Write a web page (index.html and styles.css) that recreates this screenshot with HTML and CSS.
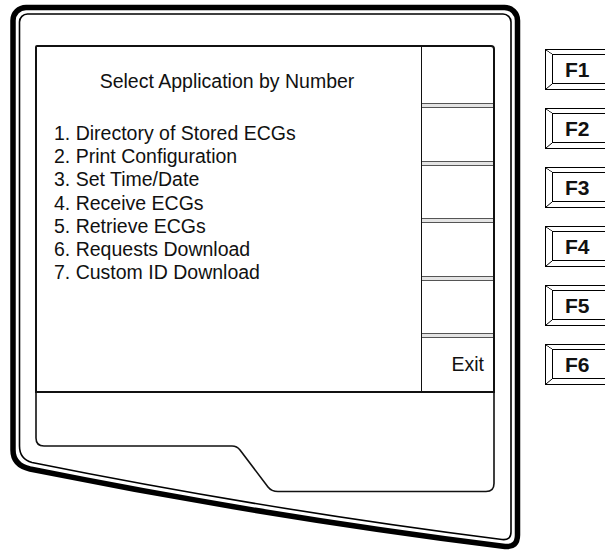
FILE: index.html
```html
<!DOCTYPE html>
<html lang="en">
<head>
  <meta charset="UTF-8" />
  <meta name="viewport" content="width=device-width, initial-scale=1.0"/>
  <title>Select Application</title>
  <link rel="stylesheet" href="styles.css">
</head>
<body>

  <div class="panel">
    <!-- bezel and lower screen outline, drawn on the panel canvas -->
    <svg class="bezel" width="605" height="552" viewBox="0 0 605 552">
      <path class="outer" d="M 13 20.5 A 13 13 0 0 1 26 7.5 L 504.5 7.5 A 13 13 0 0 1 517.5 20.5 L 517.5 535 Q 517.5 547.5 505 546.5 Q 268 517 30 469 Q 13 465 13 450 Z"/>
      <path class="inner" d="M 19.5 22 A 8 8 0 0 1 27.5 14 L 503 14 A 8 8 0 0 1 511 22 L 511 532 Q 511 540.5 502 539.5 Q 268 510 32 462.5 Q 19.5 459 19.5 446 Z"/>
      <path class="lower" d="M 36 392 L 36 438 Q 36 446 44 446 L 232 446 Q 237 446 240 450 L 268 487 Q 271.5 491.5 278 491.5 L 486 491.5 Q 494 491.5 494 483.5 L 494 392"/>
    </svg>

    <div class="screen">
      <div class="menu">
        <div class="menu-title">Select Application by Number</div>
        <ol class="menu-list">
          <li>1. Directory of Stored ECGs</li>
          <li>2. Print Configuration</li>
          <li>3. Set Time/Date</li>
          <li>4. Receive ECGs</li>
          <li>5. Retrieve ECGs</li>
          <li>6. Requests Download</li>
          <li>7. Custom ID Download</li>
        </ol>
      </div>
      <div class="softkeys">
        <div class="softkey first"></div>
        <div class="sep"></div>
        <div class="softkey"></div>
        <div class="sep"></div>
        <div class="softkey"></div>
        <div class="sep"></div>
        <div class="softkey"></div>
        <div class="sep"></div>
        <div class="softkey"></div>
        <div class="sep"></div>
        <div class="softkey last">Exit</div>
      </div>
    </div>

    <div class="keys">
      <div class="key"><div class="key-face">F1</div></div>
      <div class="key"><div class="key-face">F2</div></div>
      <div class="key"><div class="key-face">F3</div></div>
      <div class="key"><div class="key-face">F4</div></div>
      <div class="key"><div class="key-face">F5</div></div>
      <div class="key"><div class="key-face">F6</div></div>
    </div>
  </div>

</body>
</html>
```

FILE: styles.css
```css
body {
  margin: 0;
  background: #fff;
  color: #111;
  font-family: "Liberation Sans", Arial, sans-serif;
  overflow: hidden;
}
.panel {
  position: relative;
  display: flex;
  align-items: flex-start;
  width: 605px;
  height: 552px;
  overflow: hidden;
}
.bezel {
  position: absolute;
  left: 0;
  top: 0;
  pointer-events: none;
}
.bezel path {
  fill: none;
  stroke: #000;
}
.bezel .outer {
  stroke-width: 5.5;
}
.bezel .inner {
  stroke-width: 1.6;
}
.bezel .lower {
  stroke-width: 1.6;
  stroke: #111;
}

/* upper part of the display: menu + soft key column */
.screen {
  position: relative;
  flex-shrink: 0;
  display: grid;
  grid-template-columns: 384px 1fr;
  box-sizing: border-box;
  width: 460px;
  height: 348px;
  margin: 45px 0 0 35px;
  border: 2px solid #111;
  border-radius: 2px 4px 0 0;
}
.menu {
  padding-top: 23px;
  font-size: 19.5px;
}
.menu-title {
  text-align: center;
  line-height: 23px;
  padding-right: 4px;
}
.menu-list {
  list-style: none;
  margin: 29px 0 0;
  padding: 0 0 0 17px;
  line-height: 23.2px;
}
.softkeys {
  display: flex;
  flex-direction: column;
  border-left: 1px solid #111;
}
.softkey {
  height: 52.5px;
}
.softkey.first {
  height: 56px;
}
.softkey.last {
  flex: 1;
  display: flex;
  align-items: center;
  justify-content: flex-end;
  padding-right: 9px;
  font-size: 19.5px;
}
.sep {
  box-sizing: border-box;
  height: 5px;
  border-top: 1px solid #555;
  border-bottom: 1px solid #555;
  background: #e4e4e4;
}

/* hard function keys on the right */
.keys {
  flex-shrink: 0;
  display: flex;
  flex-direction: column;
  gap: 18px;
  margin: 49px 0 0 50px;
}
.key {
  position: relative;
  box-sizing: border-box;
  width: 80px;
  height: 41px;
  padding: 4px 0 5px 6px;
  border: 1px solid #000;
  border-right: 0;
}
.key::before,
.key::after {
  content: "";
  position: absolute;
  left: 0;
  width: 6px;
}
.key::before {
  top: 0;
  height: 4px;
  background: linear-gradient(to top right, transparent 40%, #000 50%, transparent 60%);
}
.key::after {
  bottom: 0;
  height: 5px;
  background: linear-gradient(to bottom right, transparent 40%, #000 50%, transparent 60%);
}
.key-face {
  display: flex;
  align-items: center;
  box-sizing: border-box;
  height: 100%;
  padding: 1px 0 0 12px;
  border: 1px solid #000;
  border-right: 0;
  font-size: 21px;
  font-weight: bold;
}
```
